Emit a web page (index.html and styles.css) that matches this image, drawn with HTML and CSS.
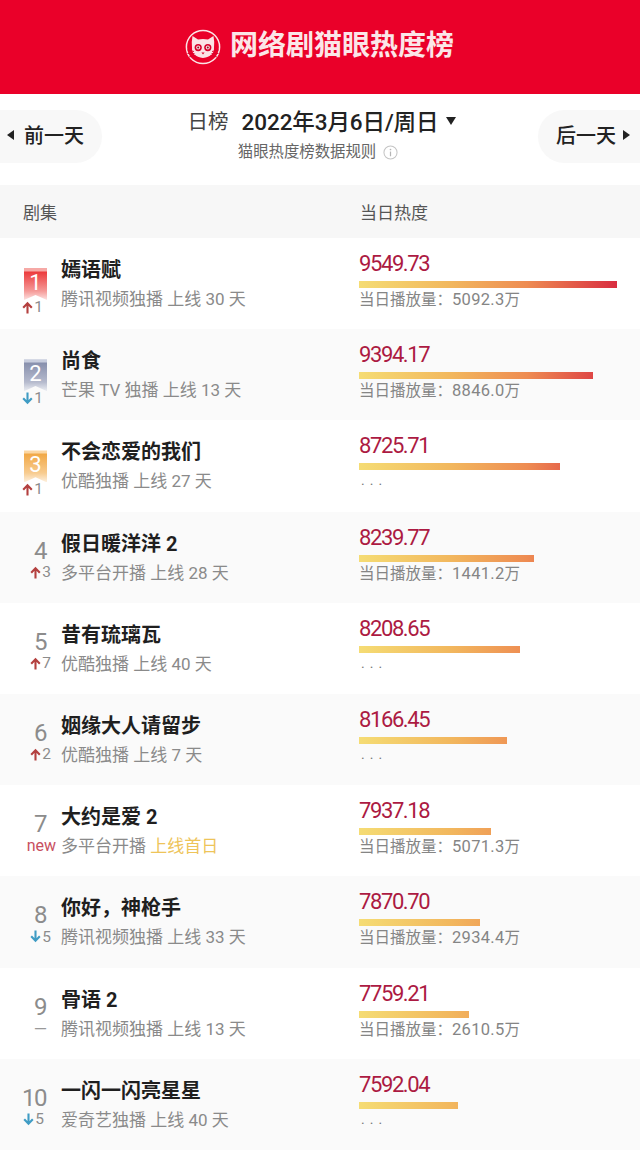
FILE: index.html
```html
<!DOCTYPE html>
<html lang="zh-CN">
<head>
<meta charset="utf-8">
<title>网络剧猫眼热度榜</title>
<link rel="stylesheet" href="styles.css">
</head>
<body>
<svg class="defs" width="0" height="0" aria-hidden="true">
  <symbol id="arrow-up" viewBox="0 0 11 13"><path d="M5.5 12.5V2.5M1.2 6.8L5.5 2.2L9.8 6.8" fill="none" stroke="currentColor" stroke-width="2.1"/></symbol>
  <symbol id="arrow-down" viewBox="0 0 11 13"><path d="M5.5 .5V10.5M1.2 6.2L5.5 10.8L9.8 6.2" fill="none" stroke="currentColor" stroke-width="2.1"/></symbol>
</svg>
<header class="top">
  <svg class="logo" viewBox="0 0 36 36" width="36" height="36" aria-hidden="true">
    <circle cx="18" cy="18" r="16.6" fill="none" stroke="#fbe3e6" stroke-width="1.5"/>
    <path d="M7.5 7 L13 10.4 Q18 9.4 23 10.4 L28.5 7 Q29.8 14 29 18.5 Q29.5 27.5 18 29 Q6.5 27.5 7 18.5 Q6.2 14 7.5 7Z" fill="#fbe3e6"/>
    <circle cx="13.2" cy="18.6" r="3.6" fill="#d8002a"/>
    <circle cx="22.8" cy="18.6" r="3.6" fill="#d8002a"/>
    <circle cx="13.2" cy="18.6" r="2" fill="#fbe3e6"/>
    <circle cx="22.8" cy="18.6" r="2" fill="#fbe3e6"/>
    <circle cx="13.2" cy="18.6" r="1" fill="#8a1020"/>
    <circle cx="22.8" cy="18.6" r="1" fill="#8a1020"/>
    <path d="M16.4 23.6 L19.6 23.6 L18 25.4Z" fill="#d8002a"/>
    <path d="M2.5 21 L9 22.5 M2.5 24.5 L9.5 24.6 M4 28 L10.5 26.4 M33.5 21 L27 22.5 M33.5 24.5 L26.5 24.6 M32 28 L25.5 26.4" stroke="#d8002a" stroke-width=".9" fill="none"/>
  </svg>
  <h1 class="top-title">网络剧猫眼热度榜</h1>
</header>

<section class="datebar">
  <div class="daybtn daybtn-prev"><span class="tri tri-left"></span>前一天</div>
  <div class="datemid">
    <div class="dateline"><span class="datekind">日榜</span><span class="datevalue">2022年3月6日/周日</span><span class="tri tri-down"></span></div>
    <div class="rules">猫眼热度榜数据规则
      <svg class="info" viewBox="0 0 16 16" width="15" height="15" aria-hidden="true">
        <circle cx="8" cy="8" r="7" fill="none" stroke="#c4c4c4" stroke-width="1.1"/>
        <path d="M8 7v5" stroke="#b5b5b5" stroke-width="1.3"/>
        <circle cx="8" cy="4.8" r=".9" fill="#b5b5b5"/>
      </svg>
    </div>
  </div>
  <div class="daybtn daybtn-next">后一天<span class="tri tri-right"></span></div>
</section>

<div class="thead"><span class="col-name">剧集</span><span class="col-heat">当日热度</span></div>

<main class="list">
  <article class="row">
    <div class="rank"><div class="ribbon ribbon-1">1</div><div class="chg chg-top"><svg class="arrow up"><use href="#arrow-up"/></svg>1</div></div>
    <div class="info-col"><h2 class="name">嫣语赋</h2><p class="sub">腾讯视频独播 上线 30 天</p></div>
    <div class="heat"><div class="score">9549.73</div><div class="bar" style="width:258px"></div><div class="plays">当日播放量：<span class="num">5092.3</span>万</div></div>
  </article>
  <article class="row">
    <div class="rank"><div class="ribbon ribbon-2">2</div><div class="chg chg-top"><svg class="arrow down"><use href="#arrow-down"/></svg>1</div></div>
    <div class="info-col"><h2 class="name">尚食</h2><p class="sub">芒果 TV 独播 上线 13 天</p></div>
    <div class="heat"><div class="score">9394.17</div><div class="bar" style="width:234px"></div><div class="plays">当日播放量：<span class="num">8846.0</span>万</div></div>
  </article>
  <article class="row">
    <div class="rank"><div class="ribbon ribbon-3">3</div><div class="chg chg-top"><svg class="arrow up"><use href="#arrow-up"/></svg>1</div></div>
    <div class="info-col"><h2 class="name">不会恋爱的我们</h2><p class="sub">优酷独播 上线 27 天</p></div>
    <div class="heat"><div class="score">8725.71</div><div class="bar" style="width:201px"></div><div class="plays plays-none">...</div></div>
  </article>
  <article class="row">
    <div class="rank"><div class="no">4</div><div class="chg"><svg class="arrow up"><use href="#arrow-up"/></svg>3</div></div>
    <div class="info-col"><h2 class="name">假日暖洋洋 2</h2><p class="sub">多平台开播 上线 28 天</p></div>
    <div class="heat"><div class="score">8239.77</div><div class="bar" style="width:175px"></div><div class="plays">当日播放量：<span class="num">1441.2</span>万</div></div>
  </article>
  <article class="row">
    <div class="rank"><div class="no">5</div><div class="chg"><svg class="arrow up"><use href="#arrow-up"/></svg>7</div></div>
    <div class="info-col"><h2 class="name">昔有琉璃瓦</h2><p class="sub">优酷独播 上线 40 天</p></div>
    <div class="heat"><div class="score">8208.65</div><div class="bar" style="width:161px"></div><div class="plays plays-none">...</div></div>
  </article>
  <article class="row">
    <div class="rank"><div class="no">6</div><div class="chg"><svg class="arrow up"><use href="#arrow-up"/></svg>2</div></div>
    <div class="info-col"><h2 class="name">姻缘大人请留步</h2><p class="sub">优酷独播 上线 7 天</p></div>
    <div class="heat"><div class="score">8166.45</div><div class="bar" style="width:148px"></div><div class="plays plays-none">...</div></div>
  </article>
  <article class="row">
    <div class="rank"><div class="no">7</div><div class="chg chg-new">new</div></div>
    <div class="info-col"><h2 class="name">大约是爱 2</h2><p class="sub">多平台开播 <span class="first">上线首日</span></p></div>
    <div class="heat"><div class="score">7937.18</div><div class="bar" style="width:132px"></div><div class="plays">当日播放量：<span class="num">5071.3</span>万</div></div>
  </article>
  <article class="row">
    <div class="rank"><div class="no">8</div><div class="chg"><svg class="arrow down"><use href="#arrow-down"/></svg>5</div></div>
    <div class="info-col"><h2 class="name">你好，神枪手</h2><p class="sub">腾讯视频独播 上线 33 天</p></div>
    <div class="heat"><div class="score">7870.70</div><div class="bar" style="width:121px"></div><div class="plays">当日播放量：<span class="num">2934.4</span>万</div></div>
  </article>
  <article class="row">
    <div class="rank"><div class="no">9</div><div class="chg chg-same">—</div></div>
    <div class="info-col"><h2 class="name">骨语 2</h2><p class="sub">腾讯视频独播 上线 13 天</p></div>
    <div class="heat"><div class="score">7759.21</div><div class="bar" style="width:110px"></div><div class="plays">当日播放量：<span class="num">2610.5</span>万</div></div>
  </article>
  <article class="row">
    <div class="rank"><div class="no">10</div><div class="chg chg-shift"><svg class="arrow down"><use href="#arrow-down"/></svg>5</div></div>
    <div class="info-col"><h2 class="name">一闪一闪亮星星</h2><p class="sub">爱奇艺独播 上线 40 天</p></div>
    <div class="heat"><div class="score">7592.04</div><div class="bar" style="width:99px"></div><div class="plays plays-none">...</div></div>
  </article>
</main>
</body>
</html>
```

FILE: styles.css
```css
* { box-sizing: border-box; }
html, body { margin: 0; padding: 0; }
body {
  width: 640px;
  height: 1160px;
  overflow: hidden;
  background: #fff;
  color: #222;
  font-family: Roboto, "Noto Sans CJK SC", sans-serif;
}
h1, h2, p { margin: 0; font-weight: inherit; }
.defs { position: absolute; }

.top {
  height: 94px;
  background: #ea0029;
  display: flex;
  align-items: center;
  justify-content: center;
  gap: 9px;
  padding-right: 1px;
}
.top-title { font-size: 28px; line-height: 36px; font-weight: 700; color: #fbe6e8; padding-bottom: 3px; }

.datebar {
  height: 91px;
  display: flex;
  justify-content: space-between;
  align-items: flex-start;
  padding-top: 16px;
}
.daybtn {
  width: 102px;
  height: 53px;
  background: #f8f8f8;
  display: flex;
  align-items: center;
  gap: 10px;
  padding-bottom: 4px;
  font-size: 20px;
  font-weight: 500;
  color: #222;
}
.daybtn-prev { border-radius: 0 27px 27px 0; padding-left: 7px; }
.daybtn-next { border-radius: 27px 0 0 27px; padding-left: 18px; gap: 7px; }
.tri { display: inline-block; width: 0; height: 0; border-style: solid; }
.tri-left { border-width: 5.5px 7px 5.5px 0; border-color: transparent #222 transparent transparent; }
.tri-right { border-width: 5.5px 0 5.5px 7px; border-color: transparent transparent transparent #222; }
.tri-down { border-width: 8px 5.5px 0 5.5px; border-color: #222 transparent transparent transparent; margin-left: 8px; margin-bottom: 3px; }

.datemid { display: flex; flex-direction: column; align-items: center; margin-top: -4px; margin-left: 4px; }
.dateline { display: flex; align-items: center; height: 32px; font-size: 20.5px; line-height: 32px; }
.datekind { color: #444; margin-right: 13px; }
.datevalue { color: #222; font-size: 22.5px; font-weight: 500; letter-spacing: -.1px; }
.rules { display: flex; align-items: center; gap: 7px; font-size: 15.4px; line-height: 24px; color: #666; margin-top: 2px; margin-right: 8px; }

.thead {
  height: 53px;
  background: #f7f7f7;
  display: flex;
  align-items: center;
  font-size: 17px;
  color: #555;
}
.col-name { width: 360px; padding-left: 23px; }

.row {
  height: 91.2px;
  display: flex;
  align-items: flex-start;
  padding-top: 18px;
}
.row:nth-child(even) { background: #fafafa; }

.rank { width: 61px; height: 66px; display: flex; flex-direction: column; align-items: flex-end; padding-top: 8px; flex: none; }
.no { font-size: 24px; line-height: 26px; color: #8c8c8c; padding-right: 15px; letter-spacing: -1.5px; }
.ribbon {
  width: 23px;
  height: 32px;
  margin-top: 4px;
  margin-right: 14px;
  display: flex;
  align-items: flex-start;
  justify-content: center;
  padding-top: 2px;
  font-size: 22px;
  line-height: 26px;
  color: #fff;
  clip-path: polygon(0 0, 100% 0, 100% 100%, 50% 84%, 0 100%);
}
.ribbon-1 { background: linear-gradient(#f6a9a6 0, #f6a9a6 3px, #ec3b3d 4px, #f59a98 72%, #fde3e2 100%); }
.ribbon-2 { background: linear-gradient(#c9cede 0, #c9cede 3px, #8890ad 4px, #b5bacd 72%, #eceef3 100%); }
.ribbon-3 { background: linear-gradient(#fbd7a4 0, #fbd7a4 3px, #f1a846 4px, #f8cc90 72%, #fdf0de 100%); }

.chg { display: flex; align-items: center; gap: 1px; font-size: 15.5px; line-height: 14px; height: 14px; color: #8c8c8c; padding-right: 10px; margin-top: 1.5px; white-space: nowrap; }
.chg-top { padding-right: 18px; margin-top: 0; }
.chg-shift { padding-right: 17px; }
.chg-new { color: #c8505f; padding-right: 5px; font-size: 16px; }
.chg-same { color: #999; padding-right: 14px; font-size: 17px; margin-top: 2.5px; }
.arrow { width: 11px; height: 13px; }
.up { color: #b4403f; }
.down { color: #3f9cc4; }

.info-col { width: 298px; flex: none; }
.name { font-size: 20px; line-height: 29px; font-weight: 700; color: #1f1f1f; }
.sub { font-size: 17px; line-height: 29px; color: #8a8a8a; white-space: nowrap; }
.first { color: #eec45a; }

.heat { flex: 1; margin-top: -5px; }
.score { font-size: 22px; line-height: 26px; letter-spacing: -1.4px; color: #ac1a42; }
.bar {
  height: 7px;
  margin-top: 4px;
  background: linear-gradient(90deg, #f5dc74 0, #f2b85e 35%, #ee8c52 65%, #d92d40 100%);
  background-size: 258px 100%;
  background-repeat: no-repeat;
}
.plays { font-size: 15.5px; line-height: 24px; color: #858585; }
.plays .num { letter-spacing: .3px; font-size: 16.5px; }
.plays-none { letter-spacing: 5px; font-size: 14px; color: #777; line-height: 20px; padding-left: 2px; }
```
